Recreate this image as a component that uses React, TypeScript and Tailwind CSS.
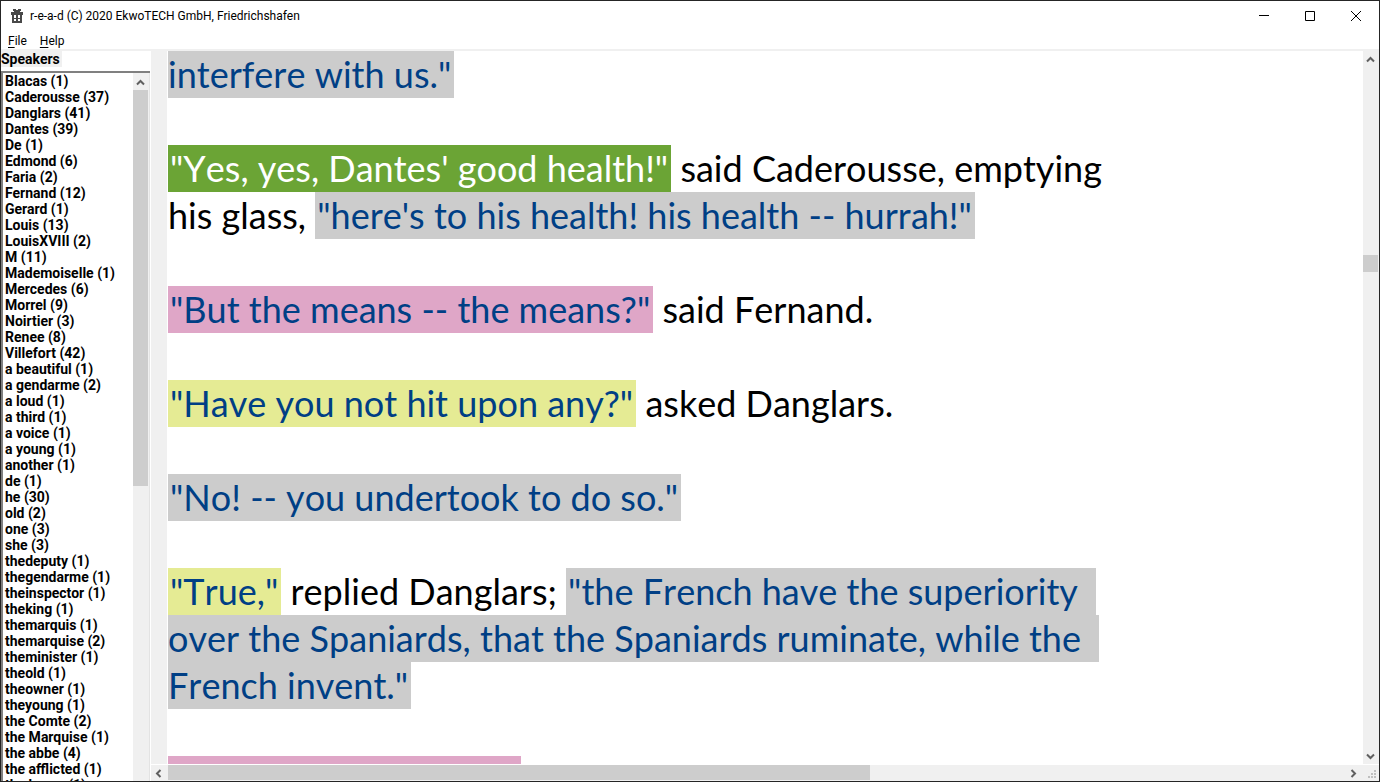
import React from "react";

const speakers = [
  "Blacas (1)", "Caderousse (37)", "Danglars (41)", "Dantes (39)", "De (1)", "Edmond (6)", "Faria (2)",
  "Fernand (12)", "Gerard (1)", "Louis (13)", "LouisXVIII (2)", "M (11)", "Mademoiselle (1)", "Mercedes (6)",
  "Morrel (9)", "Noirtier (3)", "Renee (8)", "Villefort (42)", "a beautiful (1)", "a gendarme (2)", "a loud (1)",
  "a third (1)", "a voice (1)", "a young (1)", "another (1)", "de (1)", "he (30)", "old (2)", "one (3)", "she (3)",
  "thedeputy (1)", "thegendarme (1)", "theinspector (1)", "theking (1)", "themarquis (1)", "themarquise (2)",
  "theminister (1)", "theold (1)", "theowner (1)", "theyoung (1)", "the Comte (2)", "the Marquise (1)",
  "the abbe (4)", "the afflicted (1)", "the baron (1)",
];

const tones = {
  plain: "text-black",
  gray: "bg-[#cccccc] text-[#003f85]",
  green: "bg-[#6ba435] text-white",
  pink: "bg-[#dfa6c7] text-[#003f85]",
  yellow: "bg-[#e5eb94] text-[#003f85]",
};

type Run = [keyof typeof tones, string];

const paragraphs: Run[][][] = [
  [[["gray", 'interfere with us."']]],
  [
    [["green", '"Yes, yes, Dantes\' good health!"'], ["plain", " said Caderousse, emptying"]],
    [["plain", "his glass, "], ["gray", '"here\'s to his health! his health -- hurrah!"']],
  ],
  [[["pink", '"But the means -- the means?"'], ["plain", " said Fernand."]]],
  [[["yellow", '"Have you not hit upon any?"'], ["plain", " asked Danglars."]]],
  [[["gray", '"No! -- you undertook to do so."']]],
  [
    [["yellow", '"True,"'], ["plain", " replied Danglars; "], ["gray", '"the French have the superiority  ']],
    [["gray", "over the Spaniards, that the Spaniards ruminate, while the  "]],
    [["gray", 'French invent."']],
  ],
  [[["pink", '"Yes; but I undertook"']]],
];

const turns = { up: "", down: "rotate-180", left: "-rotate-90", right: "rotate-90" };

function Arrow({ dir }: { dir: keyof typeof turns }) {
  return (
    <button aria-label={`Scroll ${dir}`} className="flex h-4 w-[15px] shrink-0 items-center justify-center">
      <svg viewBox="0 0 9 7" className={`h-[7px] w-[9px] ${turns[dir]}`}>
        <path d="M1 5.5 4.5 2 8 5.5" fill="none" stroke="#606060" strokeWidth="2" />
      </svg>
    </button>
  );
}

function Speech({ run: [tone, text] }: { run: Run }) {
  const start = text.startsWith('"') ? "pl-0.5" : "";
  const end = text.endsWith('"') ? "pr-[3px]" : "";
  return <span className={`${tones[tone]} ${start} ${end}`}>{text}</span>;
}

export default function App() {
  return (
    <div className="flex h-screen flex-col overflow-hidden border border-[#252525] bg-white text-black">
      <header className="flex h-[30px] shrink-0 items-center pl-[10px] font-['Roboto',sans-serif] text-[12px]">
        <svg viewBox="0 0 12 14" className="mr-[7px] h-[14px] w-[12px]" fill="#484848">
          <path d="M2 0h3v1h2V0h3v2H9v1h3v3H0V3h3V2H2z" />
          <path fillRule="evenodd" d="M1 6h10v8H1zM3 6v3h2V6zM7 6v3h2V6zM3 10v2h2v-2zM7 10v2h2v-2z" />
        </svg>
        <h1 className="flex-1">r-e-a-d (C) 2020 EkwoTECH GmbH, Friedrichshafen</h1>
        <button aria-label="Minimize" className="flex h-full w-[46px] items-center justify-center">
          <svg viewBox="0 0 10 10" className="size-[10px]"><path d="M0 4.5h10" stroke="#000" /></svg>
        </button>
        <button aria-label="Maximize" className="flex h-full w-[46px] items-center justify-center">
          <svg viewBox="0 0 10 10" className="size-[10px]"><path d="M.5.5h9v9h-9z" fill="none" stroke="#000" /></svg>
        </button>
        <button aria-label="Close" className="flex h-full w-[46px] items-center justify-center">
          <svg viewBox="0 0 10 10" className="size-[10px]"><path d="m0 0 10 10M10 0 0 10" stroke="#000" /></svg>
        </button>
      </header>
      <nav className="flex h-5 shrink-0 items-center gap-[13px] border-b-2 border-[#f0f0f0] pt-0.5 pl-[7px] font-['Roboto',sans-serif] text-[12px]">
        <button><span className="underline underline-offset-2">F</span>ile</button>
        <button><span className="underline underline-offset-2">H</span>elp</button>
      </nav>
      <div className="flex min-h-0 flex-1">
        <aside className="flex w-[150px] shrink-0 flex-col pr-px font-['Roboto',sans-serif] text-[14px] leading-4 font-bold">
          <h2 className="mb-1 w-[61px] bg-[#f0f0f0]">Speakers</h2>
          <div className="flex min-h-0 flex-1 border-t-2 border-l-2 border-[#808080]">
            <ul className="min-w-0 flex-1 overflow-hidden pl-0.5">
              {speakers.map((name) => (
                <li key={name}>
                  <button className="block w-full text-left whitespace-nowrap">{name}</button>
                </li>
              ))}
            </ul>
            <div className="flex w-[17px] flex-col border-r border-[#e3e3e3] bg-[#f0f0f0] pt-px">
              <Arrow dir="up" />
              <div className="mr-px h-[56%] bg-[#cdcdcd]" />
            </div>
          </div>
        </aside>
        <div className="flex min-w-0 flex-1 flex-col">
          <div className="flex min-h-0 flex-1">
            <div className="mr-px w-4 shrink-0 bg-[#f0f0f0]" />
            <main className="min-w-0 flex-1 overflow-hidden font-['Lato',sans-serif] text-[36px] leading-[47px] [font-kerning:none]">
              {paragraphs.map((lines, p) => (
                <div key={p} className="mb-[47px]">
                  {lines.map((runs, l) => (
                    <p key={l} className="flex whitespace-pre">
                      {runs.map((run) => (
                        <Speech key={run[1]} run={run} />
                      ))}
                    </p>
                  ))}
                </div>
              ))}
            </main>
            <div className="flex w-4 shrink-0 flex-col bg-[#f0f0f0]">
              <Arrow dir="up" />
              <div className="flex-[188]" />
              <div className="mr-px h-[17px] bg-[#cdcdcd]" />
              <div className="flex-[476]" />
              <Arrow dir="down" />
            </div>
          </div>
          <div className="flex h-[17px] shrink-0 border-t border-white bg-[#f0f0f0]">
            <Arrow dir="left" />
            <div className="ml-0.5 flex flex-1">
              <div className="mb-px flex-[702] bg-[#cdcdcd]" />
              <div className="flex-[476]" />
            </div>
            <Arrow dir="right" />
            <svg viewBox="0 0 16 16" className="ml-0.5 size-4" fill="#bfbfbf">
              <path d="M11 5h2v2h-2zM8 8h2v2H8zM11 8h2v2h-2zM5 11h2v2H5zM8 11h2v2H8zM11 11h2v2h-2z" />
            </svg>
          </div>
        </div>
      </div>
    </div>
  );
}
